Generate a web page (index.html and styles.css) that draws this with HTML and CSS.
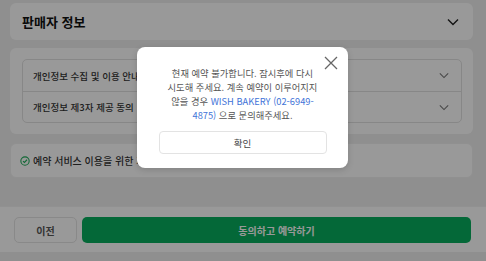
FILE: index.html
```html
<!DOCTYPE html>
<html lang="ko">
<head>
<meta charset="utf-8">
<link rel="stylesheet" href="styles.css">
</head>
<body>
<div class="page">
  <main class="content">
    <section class="card seller">
      <h2 class="card-title">판매자 정보</h2>
      <svg class="chev big" viewBox="0 0 12 8"><path d="M1 1.5 L6 6.5 L11 1.5" fill="none" stroke="#222" stroke-width="1.4"/></svg>
    </section>
    <section class="card terms">
      <div class="acc">
        <div class="acc-row"><span>개인정보 수집 및 이용 안내</span><svg class="chev" viewBox="0 0 12 8"><path d="M1 1.5 L6 6.5 L11 1.5" fill="none" stroke="#777" stroke-width="1.3"/></svg></div>
        <div class="acc-row"><span>개인정보 제3자 제공 동의</span><svg class="chev" viewBox="0 0 12 8"><path d="M1 1.5 L6 6.5 L11 1.5" fill="none" stroke="#777" stroke-width="1.3"/></svg></div>
      </div>
    </section>
    <section class="card agree">
      <svg class="check" viewBox="0 0 12 12"><circle cx="6" cy="6" r="5" fill="none" stroke="#1fae5a" stroke-width="1.3"/><path d="M3.6 6.1 L5.3 7.7 L8.4 4.5" fill="none" stroke="#1fae5a" stroke-width="1.3"/></svg>
      <span>예약 서비스 이용을 위한 개인정보 수집 및 제3자 제공 동의</span>
    </section>
  </main>
  <footer class="footer">
    <button class="btn prev">이전</button>
    <button class="btn submit">동의하고 예약하기</button>
  </footer>
</div>
<div class="overlay"></div>
<div class="modal">
  <button class="close" aria-label="닫기"><svg viewBox="0 0 14 14"><path d="M1 1 L13 13 M13 1 L1 13" stroke="#666" stroke-width="1.3" fill="none"/></svg></button>
  <p class="msg">현재 예약 불가합니다. 잠시후에 다시<br>시도해 주세요. 계속 예약이 이루어지지<br>않을 경우 <a class="link">WISH BAKERY (02-6949-<br>4875)</a> 으로 문의해주세요.</p>
  <button class="ok">확인</button>
</div>
</body>
</html>
```

FILE: styles.css
```css
* { box-sizing: border-box; margin: 0; padding: 0; }
html, body { width: 486px; height: 261px; overflow: hidden; }
body {
  background: #eeeeee;
  font-family: "Noto Sans CJK KR", "Noto Sans", sans-serif;
  color: #333;
  position: relative;
}
.page { display: flex; flex-direction: column; height: 261px; }
.content {
  display: flex; flex-direction: column; gap: 8px;
  padding: 3px 13px 0 10px;
  height: 206px;
}
.card { background: #ffffff; border-radius: 6px; }
.seller {
  height: 37px; display: flex; align-items: center; justify-content: space-between;
  padding: 0 14px 0 12px;
}
.card-title { font-size: 13px; font-weight: 700; color: #111; }
.chev { width: 10px; height: 7px; }
.chev.big { width: 12px; height: 8px; }
.terms { padding: 11px 11px 11px 12px; margin-top: 0; }
.acc { border: 1px solid #e2e2e2; border-radius: 5px; }
.acc-row {
  height: 31px; display: flex; align-items: center; justify-content: space-between;
  padding: 0 12px 0 10px; font-size: 9.5px; color: #333; font-weight: 500;
}
.acc-row + .acc-row { border-top: 1px solid #e2e2e2; }
.agree {
  height: 35px; display: flex; align-items: center; gap: 3px;
  padding: 0 9px; font-size: 10px; color: #333; font-weight: 500;
  margin-top: 1px; border: 1px solid #f0f0f0;
}
.check { width: 10px; height: 10px; }
.footer {
  height: 46px; background: #ffffff; display: flex; gap: 5px;
  padding: 10px 15px 9px 14px; border-top: 1px solid #f2f2f2;
}
.btn { font-family: inherit; border-radius: 5px; font-size: 10px; font-weight: 700; }
.prev { width: 63px; background: #fff; border: 1px solid #e4e4e4; color: #555; }
.submit { flex: 1; background: #08ae5e; border: none; color: #fff; }
.overlay { position: absolute; inset: 0; background: rgba(0,0,0,0.4); }
.modal {
  position: absolute; left: 137px; top: 47px; width: 211px; height: 121px;
  background: #fff; border-radius: 8px;
  box-shadow: 0 2px 6px rgba(0,0,0,0.15);
  display: flex; flex-direction: column; align-items: center;
  padding: 19px 21px 13px;
}
.close {
  position: absolute; right: 10px; top: 9px; width: 14px; height: 14px;
  border: none; background: none; display: flex;
}
.close svg { width: 14px; height: 14px; }
.msg {
  font-size: 9.3px; line-height: 14px; color: #555; text-align: center;
  height: 57px; white-space: nowrap;
}
.link { color: #3f74d8; }
.ok {
  margin-top: 8px; width: 168px; height: 23px; background: #fff;
  border: 1px solid #e3e3e3; border-radius: 4px;
  font-family: inherit; font-size: 9.5px; color: #444;
}
```
